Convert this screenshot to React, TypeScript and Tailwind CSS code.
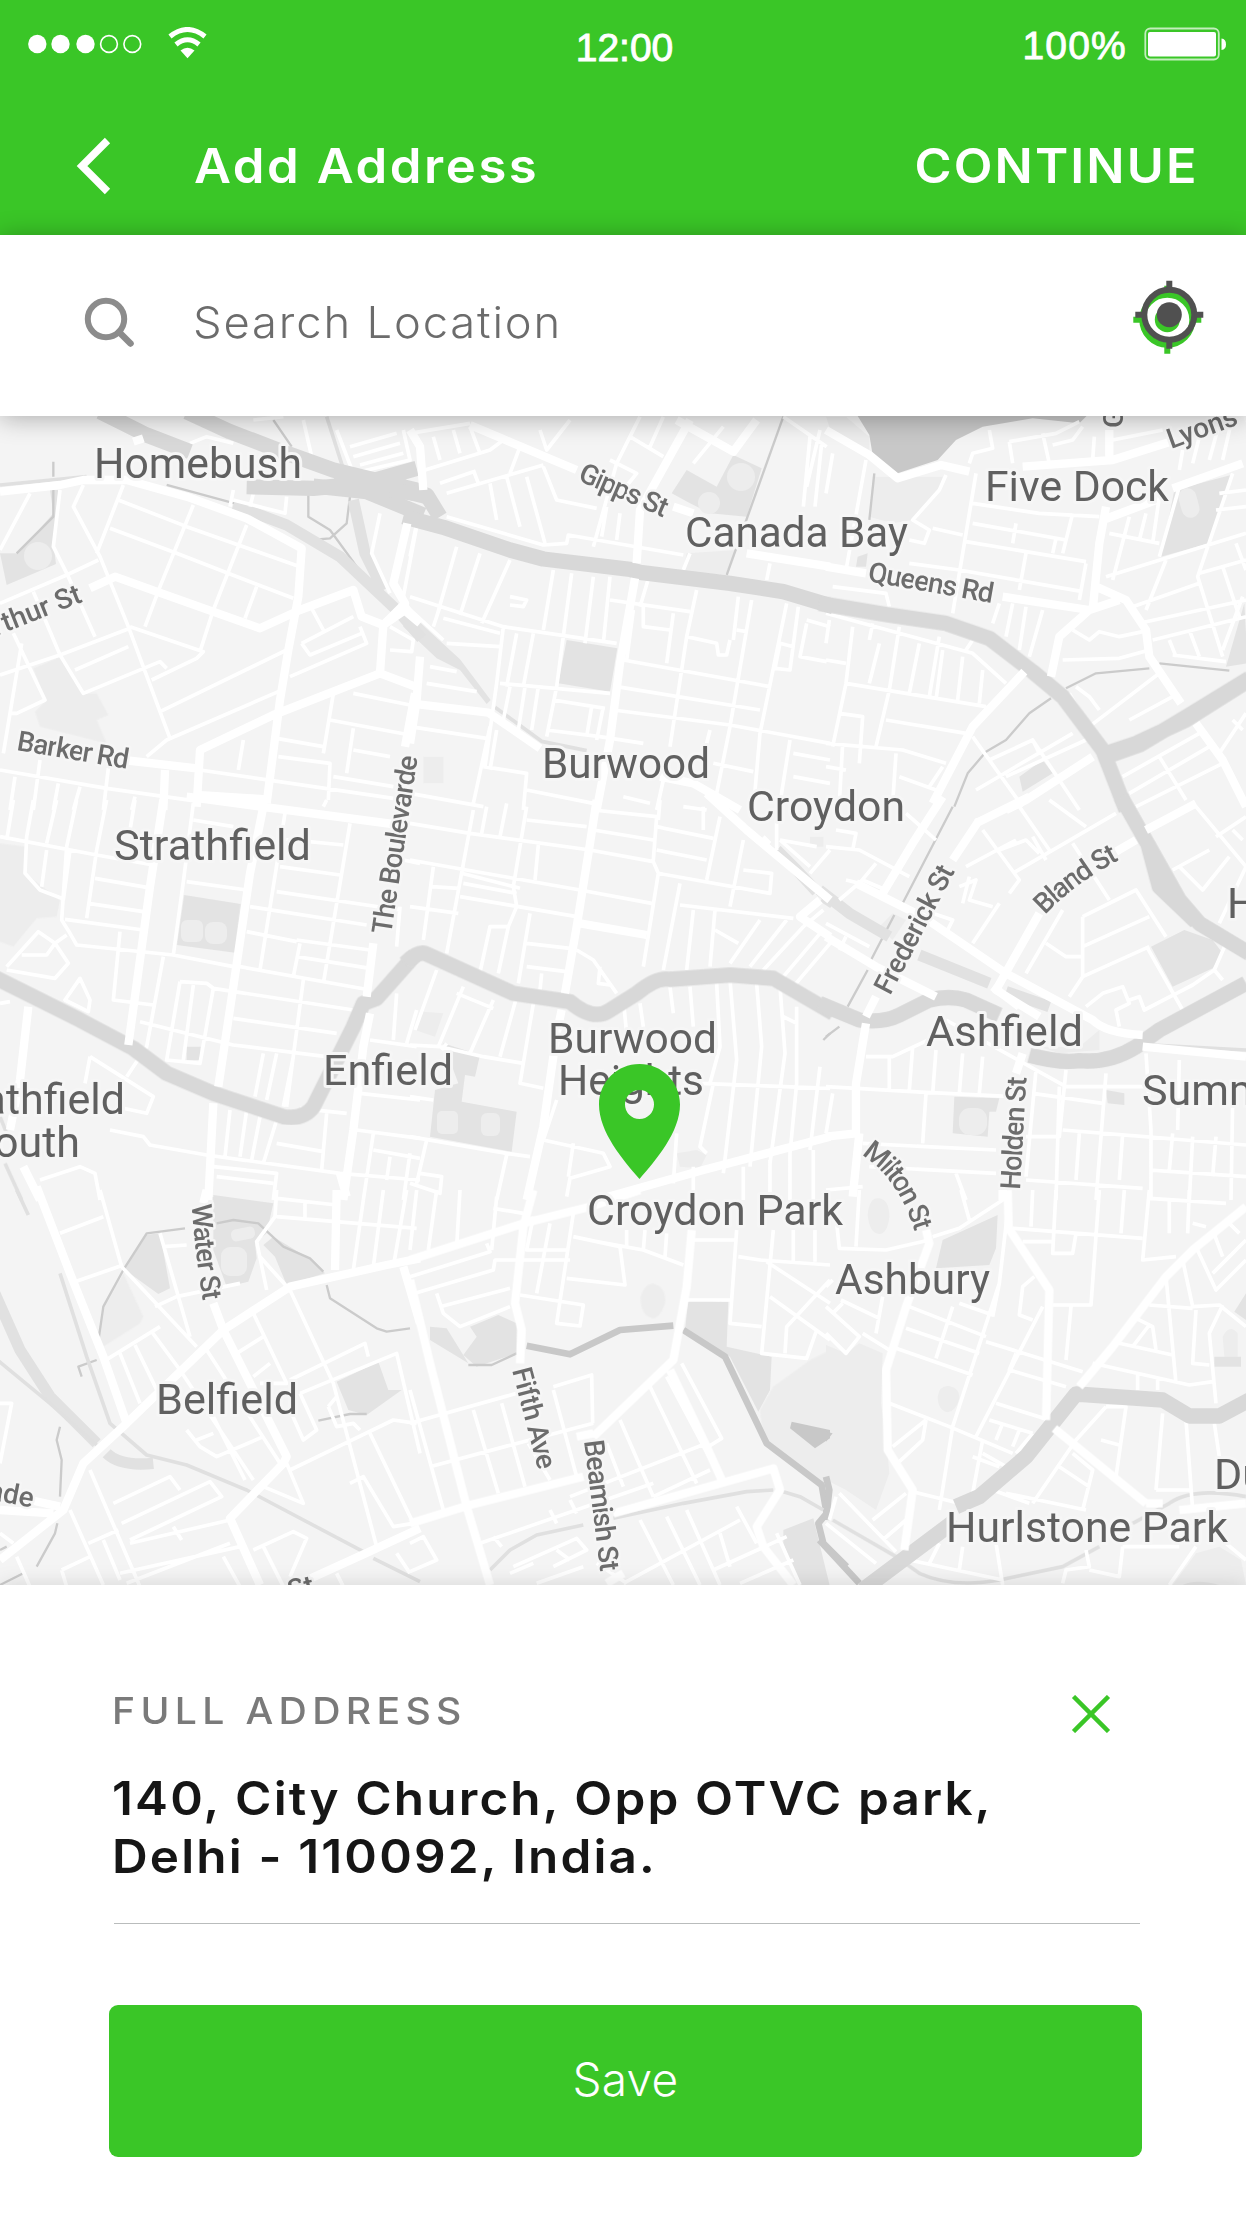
import React from "react";

type Tile = {
  x: number;
  y: number;
  paleArea?: string;
  area?: string;
  water?: string;
  minor?: string;
  street?: string;
  rail?: string;
  thinRail?: string;
  highway?: string;
  creek?: string;
  creekWide?: string;
};

/* Every tile covers 420x400 map pixels, drawn on a grid three times as fine. */
const tiles: Tile[] = [
  {
    x: 0,
    y: 410,
    paleArea:
      "M100 775L180 740L245 850L290 850L325 915L290 930L320 1000L120 950L105 905L135 875Z",
    area: "M0 430L55 430L160 310L150 240L175 240L160 400L168 462L20 525Z",
    minor:
      "M90 250L0 420M180 240L160 410L205 500L285 680M250 225L220 290L300 440L385 650L510 985M370 225L290 430M0 580L200 495L295 450M355 270L560 350L900 470M330 355L530 430L690 492L880 565M580 285L480 530L435 650M740 345L640 600L600 725M770 530L735 625M390 650L610 725L590 745L455 810M100 545L180 735L250 850L480 755L500 775M180 735L390 655M225 780L385 710M0 795L180 735M40 670L135 870L50 910L30 910M65 700L10 1030M480 905L860 720M440 1040L500 990L835 845M870 800L1100 700L1080 650M905 700L1060 620M905 700L930 735L1085 670M935 595L970 660M1140 310L1115 430L1170 550M1250 350L1210 560M1170 650L1240 690L1235 725L1170 720M1060 850L1230 885M990 930L1230 975M1060 955L1040 1090M730 990L715 1080M1000 850L970 1030M830 985L970 1010M835 1040L990 1060L985 1170M1060 1020L1170 1040M0 1080L320 1135L600 1175M600 1080L1180 1165M45 1100L30 1200M120 1050L100 1200M175 1120L160 1200M240 1130L220 1200M325 1075L310 1200M405 1160L395 1200M1000 1100L1180 1130M910 30L935 140M1010 60L1060 190L1230 150L1210 60M1050 110L1190 70M1060 140L1200 100M1080 165L1210 130M570 100L620 80L700 100M700 240L690 290M760 250L750 290M860 260L855 310L700 270M760 30L850 20",
    street:
      "M0 245L180 225L250 210L380 210L560 260L740 325L905 415L895 560L865 720L840 870L800 1180M270 535L345 500L470 545L780 655L900 600L1060 540L1085 620L1150 645M1222 340L1180 520L1215 580L1150 645L1140 790L820 915L600 1020L590 1190M1140 790L1260 835M370 1050L590 1075M590 1155L800 1168M495 1080L490 1200M1245 850L1215 1010M1200 590L1260 640M400 95L430 85M1150 645L1230 590",
    rail: "M700 285L860 345L1020 440L1185 595M1205 615L1265 685M1060 270L1095 430L1150 540",
    thinRail: "M0 225L260 200M980 20L1050 240",
    highway:
      "M300 5L440 75L570 125M560 5L690 65L860 130L1000 180L1270 245M740 230L940 235L1090 220L1250 175M940 228L1100 245L1270 315M1100 215L1280 260M1000 210L1150 240",
    creek:
      "M160 155V200M50 430L160 320V240M500 225L720 285M820 30L875 110M925 250V320L990 360L1085 490M935 390L990 385L1040 340L1050 260",
  },
  {
    x: 410,
    y: 410,
    paleArea: "M830 430L980 420L945 495L820 485ZM40 1040H100V1120H40Z",
    area: "M830 180L920 230L970 135L1055 175L1010 320L900 310L840 280L785 250ZM470 690L622 715L600 845L445 820ZM0 165L20 175L15 195L0 190ZM-20 590L60 665L150 748L242 870L230 882L150 780L80 745L-20 650Z",
    minor:
      "M0 70L180 40M45 180L240 120L280 90M70 80L90 150M130 60L150 130M180 50L210 130M90 220L190 185M110 250L400 165M190 180L205 220M240 220L260 330M290 200L330 350M350 200L405 400M390 60L410 120L480 30M330 110L300 190M400 170L440 270L560 295M690 20L620 160L550 410M660 80L760 140M600 150L680 190L640 240M630 310L620 390M590 290L575 380M110 320L400 405L470 400L475 375L820 435M760 20L720 110M940 50L850 160M1200 80L1180 290M1235 100L1215 290M1120 20L1250 110M1230 60L1190 230M820 480L840 430M20 340L0 440M140 410L80 620M210 430L150 615M300 450L215 640M430 480L400 660M485 490L440 830L410 980M550 500L525 700M600 500L580 700M720 490L690 590M0 560L280 650L620 700M90 590L70 650M100 625L270 670M110 700L270 710M300 560L350 570L340 590L300 585M280 650L260 820L225 1070M320 670L290 830M370 670L340 830M60 770L140 785M50 820L200 845M270 820L600 850M300 830L280 930M345 830L325 960M385 830L365 960M430 870L585 895M545 890L530 980M580 890L560 990M600 570L840 605M700 590V650L780 660M670 600L650 750M790 610L770 760M860 540L830 680L780 1010M830 680L920 700L925 735L950 735L960 690M640 750L1080 830M620 830L1050 900M610 900L960 945L1260 1000M985 560L970 690M1025 570L960 950L920 1150M980 660L1010 665M1130 580L1050 970L1030 1200M1165 590L1140 780L1095 775L1110 700L1150 710M1190 640L1170 740L1250 755M1190 630L1260 650M1080 460L1070 510M0 950L230 985M240 950L190 1180M260 960L240 1080M220 1070L350 1090L340 1200M410 960L570 980L700 1000M900 960L880 1040M910 1060L1030 1085M1140 990L1110 1180M1150 1030L1260 1050M1150 1100L1260 1120M0 1150L220 1190M350 1140L550 1180M640 1160L720 1180M760 1110L740 1200M-10 590L100 690",
    street:
      "M0 60L30 110L40 240M180 45L500 180M840 30L690 300L680 460M675 505L630 760L600 990L560 1200M800 30L970 125L1040 30M30 740L20 870L0 1000M0 880L235 908L390 1015M750 1100L850 1120L990 1200M790 290L850 310M1010 430L1260 470",
    thinRail: "M255 892L395 994L530 1022",
    highway:
      "M-60 240L50 255L90 320M-20 320L100 352L300 420L400 447L660 478L690 487L960 520L1120 545L1270 590",
    creek: "M1120 20L950 495",
  },
  {
    x: 826,
    y: 410,
    paleArea:
      "M140 200L350 200L340 240L260 330L200 340L130 320ZM0 20L60 20L130 80L130 120L20 80Z",
    area: "M1045 240L1215 195L1150 400L1005 440ZM580 1100L650 1050L680 1090L590 1145ZM1255 580L1200 770L1265 760ZM95 440L125 430L120 470H90Z",
    water: "M90 10L130 75L140 135L215 190L335 150L390 90L470 50L620 25L760 40L790 10Z",
    minor:
      "M20 130L0 250M120 150L60 480M360 195L340 240L260 330L310 360L295 400L250 390M430 160L440 130L500 115L490 60M550 95L560 160M550 95L690 70L760 35M650 70L670 160M680 105L740 90L770 50M805 80L800 150M860 90L1010 60M450 190L380 610M440 280L640 310L820 320M440 340L720 390M320 355L410 375M420 395L780 455M570 340L560 400M740 310L710 430M690 385L680 430M250 460L400 480L770 545M600 430L580 540M780 460L760 570M850 370L1000 400M910 320L860 510M960 310L940 390M1000 260L980 400M1020 450L960 600M1060 230L1000 440M840 500L1260 370M1220 190L1115 500L1190 740M1180 250L1260 240M1170 300L1260 290M1120 490L1260 450M920 590L1120 520M940 640L1260 570M980 690L1260 620M1190 470L1240 620M1230 400L1260 480M1250 560L1190 720M1030 690L1050 740M1090 660L1120 740M1040 735L1200 755M1100 160L1130 40M1150 150L1180 40M1190 150L1215 40M1060 180L1070 120M520 580L500 640M560 580L540 680M600 590L580 720M650 600L610 740M740 660L790 690L820 665L880 680L950 665M710 750L880 745L970 720M0 610L440 730L540 820M20 530L180 550L190 590M10 630L0 700M80 650L60 820L20 1010M140 640L130 690M220 650L190 840L150 1010M160 700L130 820M280 700L250 850M340 680L310 860M350 720L330 870M410 740L395 870M470 780L460 880M420 720L440 690M60 820L480 890M180 930L420 970M40 910L110 920L100 1060M0 1000L230 1020L360 1060M0 750L60 760M0 1070L60 1080M210 1030L200 1180M350 1070L310 1130M220 1100L330 1140M440 980L590 1190M490 1050L620 990L760 1200M450 1140L740 970M540 1100L780 990M730 850L790 950L1000 790M750 830L790 860L820 900M910 930L1040 860M1260 910L1180 1030M1250 960L1220 930M890 1100L1120 970M910 1150L1150 1010M930 1190L1190 1060M1000 1040L1080 1170M50 1000L40 1180M620 990L640 1030",
    street:
      "M0 60L130 135L215 205L345 165L430 185M590 170L860 150L1050 90M850 60V150M1040 235L1250 160M840 290L820 400L800 600M830 330L990 270M530 560L790 600L880 570M810 530L900 570L960 660L970 740L1065 880M790 600L700 680L675 800M595 785L440 950L320 1180M1110 940L1190 1050L1260 1190M800 1040L600 1170L540 1200M0 470L120 490",
    highway:
      "M-20 580L190 615L360 640L490 685L620 785L710 860L830 1020L900 1200M840 1030L930 1000L1080 930L1270 810M840 1040L940 1005L1090 915L1270 805",
    creek: "M720 835L810 790L970 775M1000 760L1210 782M675 865L610 910L540 990L480 1025L425 1090L385 1190M145 190L130 330",
  },
  {
    x: 0,
    y: 800,
    paleArea: "M0 130L75 140L75 220L180 300L170 350L110 355L40 440L0 425Z",
    area: "M552 285L722 312L705 458L530 435ZM560 740H602V780H560ZM635 1190L700 1200H630Z",
    minor:
      "M40 0L20 120M100 0L80 110L75 220L120 270L185 295M170 0L140 130M230 0L200 140L185 360L210 400L230 435L520 465L700 500M320 0L290 150L260 355M405 0L390 90M0 110L290 165L460 195M140 150L125 260M210 150L190 300M285 235L440 262M265 310L430 335M195 358L430 390M20 500L115 395L165 430L205 490L165 535L20 510M65 465L140 465L165 430L200 405M240 535L195 600L265 635L270 600ZM0 610L30 605M360 395L340 600L460 615M490 470L440 740L380 830M540 545L500 780L600 790L640 565L620 550L540 545M640 565L1060 630M580 555L550 780M420 665L700 735L980 770M580 10L550 245L520 465M560 245L740 270M580 60L700 80M855 40L780 510M1050 70L970 550M830 115L1030 135M840 200L1020 225M830 275L1200 330M750 320L1100 375M740 395L890 425M890 420L1110 450M890 470L1110 505M720 500L1110 570M900 430L880 530M910 540L860 920M700 655L1010 700M1110 720L1250 740M790 760L765 890M830 760L800 900M880 770L850 920M1190 580L1180 720M1250 630L1220 730M1200 320L1190 440M1210 180L1260 190M980 0L970 20M270 770L255 850M270 770L460 890L440 940L370 925M330 990L430 1010L450 1035L620 1065L1020 1120L1260 1140M690 930L675 1070M740 930L720 1070M780 950L755 1080M830 960L790 1090M830 1030L970 1055M980 940L965 1110M900 925L1040 940M1070 990L1260 1015M1120 1000L1090 1200M1120 1050L1260 1075M1170 1070L1160 1140M1230 1060L1210 1200M640 1100L830 1120L820 1200M650 1130L820 1150M1080 880L1260 900M120 1140L240 1100L285 1120L300 1200",
    street:
      "M490 0L450 260L385 735M790 20L750 220L700 560L655 860M640 910L625 1200M560 -10L1200 75M85 620L60 840L30 990M1120 430L1100 590M1110 640L1090 740L1060 990L1030 1200M70 1100L120 1200M1020 1120L1040 1190",
    thinRail: "M0 950L20 1000M15 1090L65 1200",
    highway:
      "M-20 530L90 585L240 660L400 745L500 820L640 880L850 950Q910 960 940 920L1060 680L1090 610L1130 595L1245 465",
  },
  {
    x: 410,
    y: 800,
    paleArea: "M40 635L100 640L75 710L15 690ZM800 1060L860 1050L890 1065L870 1105L810 1100ZM1200 110H1240V140H1200Z",
    area: "M100 730L210 765L195 830L165 825L155 905L320 935L305 1055L60 1010L75 870L145 850Z",
    minor:
      "M0 70L180 100L540 150L730 185L745 220L1080 280L1085 220L1000 210M0 180L510 270L725 310M0 320L145 340M150 290L500 350M155 220L330 265M160 250L320 280M65 260L145 265M70 200L40 420M190 30L110 460M230 20L215 100M290 10L270 110M350 20L310 260L320 320L295 380H240L205 540M295 380L265 520M385 135L375 240M360 340L325 550M350 60L530 80M350 430L480 445M350 500L470 515M395 520L390 570M550 30L740 50L730 180M550 90L730 120M750 0L745 60M740 80L910 115M740 150L890 180M930 50L890 240M880 20V90M1000 120L960 320M820 20L890 30M1080 130L1060 110M745 220L700 500M810 250L760 510M850 330L830 510M810 315L1150 355M915 330L900 500M915 390L985 430M1050 360L960 490M1130 360L1020 500M1180 380L1060 510M1230 400L1120 530M1260 430L1150 560M500 450L550 480L620 580M570 500L565 550L600 555M1260 150L1200 220M1110 120L1220 140M1110 120L1200 200M80 510L15 690M160 560L85 740M250 600L180 760M320 590L270 770M370 610L330 850L400 865M140 580L250 625M0 735L90 740L220 770L340 790M110 730L95 750M0 890L70 900M0 1010L290 1060L360 1070M290 1065L260 1200M50 1020L20 1150M0 1150L90 1180L95 1130L30 1120M400 1020L580 1060L600 1100L480 1135L470 1190M490 1030L475 1130M440 900L400 1020M640 600L650 700M690 610L700 680M780 560L790 640M840 560L850 680M920 550L930 740L900 850M960 540L980 780L940 1120M1040 550L1055 740L1020 1100M1110 560L1125 760L1080 1090M1160 620L1160 850L1140 1060M1120 650L1160 670M870 850L1260 865M910 850L870 1040L890 1060M1230 800L1200 1050M800 1000L790 1150M850 1100V1200M1000 1100V1200M1080 1080V1200M1140 1060V1200M1210 1050V1200M1100 60V150M1180 380L1240 330",
    street:
      "M560 0L540 130L500 380L465 580M510 370L710 405M455 630L440 700L400 980L350 1200M890 -20L1010 90L1260 300M1230 300L1170 350L1260 410M560 1200L880 1110L1260 1010",
    rail: "M1100 150L1160 210L1220 275M1240 290L1270 310",
    thinRail: "M940 20L1040 110L1120 170",
    highway:
      "M-15 490Q20 455 45 460L310 580L480 605Q550 665 600 630L680 580Q740 530 780 538L960 525L1090 535L1270 640",
    creek: "M1240 720L1260 700",
  },
  {
    x: 826,
    y: 800,
    paleArea: "M160 380L200 340L240 360L200 420ZM640 740L760 740L820 690V750L700 760Z",
    area: "M975 440L1075 390L1160 420L1190 460L1160 505L1040 560ZM385 890L520 895L510 935H490L485 1010L380 1000ZM840 870L895 880V915L845 910Z",
    minor:
      "M0 140L100 150L250 230M30 90L90 100L80 150M240 40L330 120M150 190L100 250L60 240M40 300L110 240L180 270M0 370L130 440M60 410L40 450M400 260L450 240L430 300L500 320M420 200L570 120M410 310L430 230M320 340L380 360L360 400M470 90L580 240L550 280M520 150L600 120L640 160M620 110L660 180M580 20L670 150M560 220L870 40M670 0L780 80M740 130L850 300M440 430L520 310M710 330L600 520M770 350L930 270L1020 410M770 350V530L730 590M770 440L970 350M770 530L970 440M965 445L1070 630M660 430L720 470H770M780 620L830 580L890 560L910 610L870 630L880 680M910 600L940 590L955 630L1100 555L1165 510L1200 430M1165 510L1190 540M1110 20L1260 200M1040 210L1150 150M1060 200L1130 270L1210 170M1170 110L1260 50M1220 90L1250 120M1180 370L1260 200M0 860L260 875L560 890M620 880L830 910M120 770L200 770L370 690M190 770V870M260 740L250 870M330 750L320 880M410 760L400 880M470 770L460 880M360 660L720 860L990 860M300 880L290 1030M110 1030L300 1040L510 1050M130 1100L510 1120M390 1120L420 1200M600 1010L700 1010L720 810M700 860L690 1200M840 820L810 1200M710 990L1260 1035M600 1140L950 1165M960 760L975 990V1200M1040 1000L1030 1110M970 1110L1260 1130M1100 1010L1090 1200M1170 1010L1160 1130M1220 900L1215 1200M760 1000L750 1140M890 1000L880 1140M0 1170L110 1160M0 1000L20 880M630 810L600 1130M1060 780L1055 990",
    street:
      "M350 -10L260 130L170 280M90 250L290 350L540 520L800 660Q840 700 950 705M0 410L150 500L330 590M120 670L90 850V1000L0 1010M460 60L380 180M610 -10L450 70M930 120L870 155M640 340L510 570L640 650M500 560L580 620M950 740L1260 770M960 90L1110 10M590 760L570 820M530 1170V1200M100 1000L80 1190M150 590L120 650",
    rail: "M-20 270L70 340L190 410M280 465L490 550M540 575L670 620",
    thinRail: "M980 735L1260 750",
    highway:
      "M-20 610L100 660Q170 670 220 645L310 600Q370 585 420 600L520 645M610 765Q700 790 760 782Q850 790 930 740L1000 690L1260 550M885 -10L970 140L1060 300L1120 370L1270 460M965 130L1000 260L1110 365",
    creek: "M380 20L230 310M205 345L130 490M125 510L65 620M40 680L0 710",
  },
  {
    x: 0,
    y: 1190,
    paleArea: "M370 250L430 380L420 400L310 470L295 440L310 350Z",
    area: "M640 15L820 40L800 130L765 160L770 205L745 275L680 290L640 180ZM435 135L480 130L510 295L475 312L375 240ZM790 165L820 140L935 210L975 250L860 285L825 200ZM1010 575L1135 515L1165 600L1205 600L1100 675L1045 660Z",
    minor:
      "M180 130L310 80M225 275L370 225M300 0L365 230L590 470M480 130L570 440M490 170L560 165M310 515L480 410M465 350L530 320L720 280M360 490L420 640M405 465L480 620M455 425L540 540M620 480L840 820M540 540L760 870M830 0L825 80L770 155L800 300M830 25L1010 45M830 80L1250 115M915 40V85M1090 30L1060 240M1150 0L1120 230M1220 0L1180 230M780 200L870 300L1000 580L1130 1070M760 370L860 580L780 580M710 490L790 440M760 560L810 520M870 570L1095 460L1105 500M900 610L1190 490L1260 790M900 610L950 720L910 750L870 660M985 650L1010 620M985 650L1010 710L1060 700L1080 720M870 840L1180 690L1250 700M1110 730L1240 1000L1180 1010L1090 860L1050 880M560 720L600 770L650 800L790 740M590 750L640 730M640 680L735 870M790 890L910 940L860 820M270 840L420 1190M340 940L510 860L540 900M365 1000L630 875L665 920L390 1050M390 1060L690 990M360 1150L720 1070M520 1010L545 1050M210 960L310 1185M265 1060L355 1020M185 1140L270 1100M185 1140L200 1190M310 1050L360 1170M760 1080L880 1025L920 1045L870 1160M790 1070L850 1190M670 1100L720 1190M0 640H35L0 820M0 1030L40 1060M50 1100L90 1190M1190 1090L1230 1150M1010 1150L1030 1190M380 1180L690 1060",
    street:
      "M110 -10L210 250L310 500L380 700M620 0L610 40M640 340L670 420L860 800L850 820L690 985L780 1185M1260 205L1160 225L870 290L670 420L380 700L250 820L190 960L0 1110M1010 0L1005 240M1210 230L1260 400M0 960L160 970M90 930L180 950M900 1180L1130 1075L1260 1015",
    rail: "M-20 300L60 480L150 620L290 760M320 790Q360 830 460 820",
    thinRail:
      "M-20 500L150 640L290 765M180 250L260 500L330 700L440 795L560 825L740 900L1090 1085M1120 1105L1260 1175M50 0L85 75",
    creek:
      "M555 115L440 130L370 240L310 350L297 440M650 100L700 90L775 100L850 170L930 205L970 245M980 285L990 325L1130 415L1160 425L1230 415M290 510L235 530L245 560M180 710L170 750L185 810L180 920M172 1000L165 1030L110 1130M70 1150L0 1185M955 692L1050 672H1100M0 1080L20 1070",
  },
  {
    x: 410,
    y: 1190,
    paleArea:
      "M1090 590L1200 510L1260 480V900L1060 750L1050 660ZM728 280Q770 290 765 340Q750 385 728 385Q690 375 692 320Q700 285 728 280Z",
    area: "M835 330L955 335L950 470L1085 500L1080 600L1045 665L960 500L825 420ZM180 410L265 375L320 400L320 490L200 530L160 495L200 440ZM60 410L110 415L175 520L60 450ZM1120 1020L1210 985L1260 1190H1170L1120 1060Z",
    water: "M1145 695L1260 720V745L1215 775L1140 715Z",
    minor:
      "M20 0L0 180M80 0L55 180M150 0L140 170M0 260L240 185L230 160M15 310L250 240L255 210L480 210M90 350L300 295M80 310L100 370L150 410L300 350M260 20L245 180M250 55L340 70M370 80L350 180L470 180M420 100L380 310M490 70L440 400L510 408L520 345L330 315M470 265L645 285L630 170L490 140M560 155L700 180L820 225M650 120V175M705 120L700 180M770 130L765 200M850 150H980M980 120L960 400L1055 410M985 200L1050 210L1260 225M1090 120L1055 490L1190 505L1220 420M1070 215L1260 340M1080 320L1260 450M1260 270L1130 410L1125 490M1150 120V215M1215 120V215M0 700L320 610M430 590L545 555L548 700M60 830L340 755L550 700M0 600L100 960M190 660L265 910M275 640L345 890M355 760L420 870M430 600L500 860M720 590L860 880M770 560L940 880M630 690L730 920M815 520L935 745L895 770M480 920L890 760M730 920L900 840M210 1060L730 880M250 1040L275 1070M480 930L500 970M420 960L440 1000M590 760L640 890M0 1060L40 1040L80 1110L0 1145M310 1130L500 1045L530 1080L430 1130M300 1150L370 1120M440 1080L480 1110M640 1180L990 990M690 990L790 1185M770 980L870 1185M830 960L930 1185M930 1030L960 1130M980 950L1040 1060M910 1140L1130 1040M990 1180L1150 1110M560 1120L650 1180M1100 1030L1170 1185M820 330H960M380 1180L520 1130",
    street:
      "M0 210L340 100L540 50L690 0M370 0L340 110L315 340L335 420L330 520M0 270L60 520L170 950L240 1185M845 120L830 290L790 510L550 740M780 540L890 770L940 880M0 1000L180 945L520 860M550 730L500 740M610 970L1090 835L1110 900L1040 1010L1060 1070L1150 1185M590 1180L640 1150",
    thinRail: "M240 1140L300 1080L380 1035L520 1005M610 985L820 940L1010 905L1090 900M1120 905L1170 920L1240 960",
    creek: "M175 525H245L320 490",
    creekWide: "M350 467L480 493L630 420L790 407M820 420L945 500L1070 760L1235 885L1250 970L1225 1000L1240 1060L1310 1130",
  },
  {
    x: 826,
    y: 1190,
    paleArea:
      "M0 465L60 490L100 460L170 490L165 640L185 790L190 850L150 960L60 900L0 870ZM125 75Q130 20 160 25Q190 30 190 80Q185 130 160 132Q130 130 125 75ZM335 620Q340 585 370 588Q402 595 400 625Q390 665 365 667Q335 660 335 620ZM1190 440Q1210 400 1235 430V500H1195ZM1040 1185L1110 1090L1180 1070L1245 1110L1260 1185Z",
    area: "M350 150L515 75L510 175L490 225L330 235ZM1165 500H1245V530H1165ZM1225 365L1260 310V390ZM1070 1185Q1110 1165 1180 1185Z",
    minor:
      "M100 0L90 170M30 80L40 175L180 180L310 150M320 140L400 115L545 20M405 0L430 90M0 430L60 490L100 440L0 350M45 330L160 385M110 430L190 480M20 370L50 340M250 350L480 440M240 415L460 490M210 475L440 555M400 340L500 375M380 350L330 505M520 280L380 710L340 960M480 455L770 545M650 350L450 740M550 20L520 280L500 380M570 490L550 540L720 590M510 640L670 690M190 640L370 710L560 790M490 690L620 730M440 800L520 830M530 700L510 750M580 720L560 770M620 730L570 790M470 750L440 910M470 790L540 830M300 690L200 770M300 690L290 750L220 815M620 0L615 110M690 0L680 190H740L750 130M560 115L950 145M820 0L795 345H680M590 155H680M625 260L590 290L580 375L620 390M735 350L720 510M895 0L885 130M970 0L950 210L1050 200M970 25L1200 40M1030 30V130M1090 0L1085 130M1100 100L1140 110M1110 170L1170 300L1260 210M1160 120L1190 200M1160 250L1260 150M1200 90L1240 130M1070 210L1100 350L1180 345L1260 410M970 345L1100 355M1020 260L1050 580M1110 360L1100 520L1150 525M1190 345L1150 430L1170 640M930 385L980 410L990 480M880 460L1040 495M970 405L920 470M800 520L1090 585L1160 575M935 550V600M995 560V600M840 650L750 750L620 940M840 650H900L870 860M825 750L880 765M1010 670L990 900M1080 690L1100 960M1165 700L1180 800M740 790L800 840L770 960M700 830L790 890M540 910L780 960M610 940L500 900M260 905L400 940M240 910L140 990M240 990L170 1050M40 910L210 1085M0 1000L150 1120M30 920L10 990M990 900H1100M250 1110L530 1170M340 1060L310 1120M410 1070L400 1140M510 1060L530 1185M780 1080L790 1130L720 1140L710 1180M890 1070L880 1160L790 1140M890 1070H1060M1110 1070L1030 1185M1200 1060L1260 1110M0 290L20 270M170 320L150 430",
    street:
      "M545 0L548 115L670 300L660 690M300 120L310 160L240 350L180 540L185 780L260 900L235 1080M760 590L860 470L1020 260L1100 180L1260 50M685 715L960 940M960 940H1010M1060 960L1260 940",
    thinRail:
      "M20 990L210 1100L280 1150Q380 1195 520 1170L710 1130L820 1070M920 1000L1030 940Q1100 890 1260 920",
    highway:
      "M110 1200L390 990M390 950L460 920L600 800L750 612L1010 630L1090 678H1180L1270 630",
    creekWide: "M0 860L10 900L0 990M-20 1050L100 1180",
    water: "M0 725L20 730L0 755Z",
  },
];

type Layer = Exclude<keyof Tile, "x" | "y">;

function MapLayer({
  name,
  fill = "none",
  stroke = "none",
  width = 0,
}: {
  name: Layer;
  fill?: string;
  stroke?: string;
  width?: number;
}) {
  return (
    <g fill={fill} stroke={stroke} strokeWidth={width} strokeLinejoin="round">
      {tiles.map((t, i) =>
        t[name] ? (
          <path key={i} d={t[name]} transform={`translate(${t.x} ${t.y}) scale(0.33333)`} />
        ) : null
      )}
    </g>
  );
}

type Place = { t: string; x: number; y: number; w?: number; end?: boolean };

const places: Place[] = [
  { t: "Homebush", x: 94, y: 478, w: 208 },
  { t: "Canada Bay", x: 685, y: 547, w: 223 },
  { t: "Five Dock", x: 985, y: 501, w: 184 },
  { t: "Burwood", x: 542, y: 778, w: 168 },
  { t: "Croydon", x: 747, y: 821, w: 158 },
  { t: "Strathfield", x: 114, y: 860, w: 197 },
  { t: "H", x: 1227, y: 918 },
  { t: "Burwood", x: 548, y: 1053, w: 169 },
  { t: "Heights", x: 558, y: 1095, w: 146 },
  { t: "Enfield", x: 323, y: 1085, w: 130 },
  { t: "Ashfield", x: 926, y: 1046, w: 157 },
  { t: "Summ", x: 1142, y: 1105 },
  { t: "athfield", x: 125, y: 1114, end: true },
  { t: "outh", x: 80, y: 1157, end: true },
  { t: "Croydon Park", x: 587, y: 1225, w: 256 },
  { t: "Ashbury", x: 835, y: 1294, w: 155 },
  { t: "Belfield", x: 156, y: 1414, w: 142 },
  { t: "Du", x: 1214, y: 1489 },
  { t: "Hurlstone Park", x: 946, y: 1542, w: 282 },
];

type Street = { t: string; d: string; w?: number };

const streets: Street[] = [
  { t: "Gipps St", d: "M577 480L683 526", w: 94 },
  { t: "Queens Rd", d: "M867 581L1020 608", w: 127 },
  { t: "rthur St", d: "M-4 636L110 591", w: 94 },
  { t: "Barker Rd", d: "M16 750L170 776", w: 113 },
  { t: "The Boulevarde", d: "M391 935L421 735", w: 180 },
  { t: "Frederick St", d: "M890 996L971 840", w: 141 },
  { t: "Bland St", d: "M1045 915Q1080 878 1135 852", w: 93 },
  { t: "Holden St", d: "M1020 1190L1028 1050", w: 113 },
  { t: "Milton St", d: "M861 1155Q903 1180 919 1247", w: 96 },
  { t: "Water St", d: "M192 1205Q194 1250 206 1320", w: 97 },
  { t: "Fifth Ave", d: "M512 1370L546 1500", w: 104 },
  { t: "Beamish St", d: "M584 1441L604 1600", w: 132 },
  { t: "Lyons R", d: "M1171 449L1270 413" },
  { t: "Gr", d: "M1123 428V350" },
  { t: "ade", d: "M-13 1499L60 1513" },
  { t: "St", d: "M290 1600L340 1588" },
];

function CityMap() {
  return (
    <svg viewBox="0 416 1246 1169" className="block h-full w-full bg-[#f4f4f4]">
      <g className="blur-[0.6px]">
        <MapLayer name="paleArea" fill="#ededed" />
        <MapLayer name="area" fill="#e3e3e3" />
        <g fill="#ededed">
          <circle cx="741" cy="477" r="14" />
          <circle cx="709" cy="503" r="11" />
          <circle cx="38" cy="556" r="14" />
          <rect x="1180" y="488" width="18" height="30" rx="9" transform="rotate(-15 1189 503)" />
          <rect x="181" y="920" width="22" height="22" rx="6" />
          <rect x="205" y="922" width="22" height="22" rx="8" />
          <rect x="437" y="1111" width="21" height="23" rx="5" />
          <rect x="481" y="1113" width="19" height="23" rx="6" />
          <rect x="959" y="1108" width="28" height="27" rx="11" />
          <rect x="231" y="1228" width="24" height="12" rx="5" transform="rotate(-12 243 1234)" />
          <rect x="221" y="1247" width="26" height="29" rx="9" />
        </g>
        <MapLayer name="water" fill="#c8c8c8" />
        <MapLayer name="creek" stroke="#cbcbcb" width={7} />
        <MapLayer name="creekWide" stroke="#c8c8c8" width={20} />
        <MapLayer name="rail" stroke="#e1e1e1" width={34} />
        <MapLayer name="thinRail" stroke="#e0e0e0" width={11} />
        <MapLayer name="minor" stroke="#ffffff" width={11} />
        <MapLayer name="highway" stroke="#d8d8d8" width={46} />
        <MapLayer name="street" stroke="#ffffff" width={25} />
      </g>
      <g
        className="blur-[0.5px]"
        fontFamily='Roboto, "Open Sans", sans-serif'
        fill="#606060"
        stroke="#f6f6f6"
        strokeWidth="6"
        strokeLinejoin="round"
        paintOrder="stroke"
      >
        {places.map((p, i) => (
          <text
            key={i}
            x={p.x}
            y={p.y}
            fontSize="43"
            textLength={p.w}
            lengthAdjust="spacingAndGlyphs"
            textAnchor={p.end ? "end" : "start"}
          >
            {p.t}
          </text>
        ))}
        {streets.map((s, i) => (
          <g key={i} strokeWidth="5">
            <path id={`street-${i}`} d={s.d} fill="none" stroke="none" />
            <text fontSize="28" fontWeight="500" fill="#6c6c6c" textLength={s.w}>
              <textPath href={`#street-${i}`}>{s.t}</textPath>
            </text>
          </g>
        ))}
      </g>
    </svg>
  );
}

function StatusBar() {
  return (
    <div className="grid h-[88px] shrink-0 grid-cols-3 items-center pl-[28px] pr-[20px] font-['Liberation_Sans',sans-serif] text-[39px] leading-none">
      <div className="flex items-center gap-[26px]">
        <svg width="114" height="20" viewBox="28 34 114 20" fill="#fff">
          <circle cx="37.3" cy="44" r="9.2" />
          <circle cx="60.5" cy="44" r="9.2" />
          <circle cx="85.5" cy="44" r="9.2" />
          <g fill="none" stroke="#fff" strokeWidth="1.6">
            <circle cx="109" cy="44" r="8.4" />
            <circle cx="132.3" cy="44" r="8.4" />
          </g>
        </svg>
        <svg width="40" height="32" viewBox="168 27 40 32" className="-mt-[2px]">
          <g fill="none" stroke="#fff" strokeWidth="5">
            <path d="M170 36.5Q187.500 22.500 205 36.500" />
            <path d="M176 44.500Q187.500 35 199 44.500" />
          </g>
          <path d="M180.500 50.500Q187.500 45 194.500 50.500L187.500 58.200Z" fill="#fff" />
        </svg>
      </div>
      <span className="mr-[5px] mt-[6px] text-center [-webkit-text-stroke:0.9px_white]">12:00</span>
      <div className="flex items-center justify-end gap-[17px]">
        <span className="mt-[3px] tracking-[1.2px] [-webkit-text-stroke:0.9px_white]">100%</span>
        <svg width="82" height="34" viewBox="1144 27 82 34">
          <rect x="1145.300" y="28.500" width="73.500" height="31" rx="5" fill="none" stroke="#c4eebe" strokeWidth="1.800" />
          <rect x="1148" y="32" width="68" height="24.500" rx="2" fill="#fff" />
          <path d="M1221.500 38.500Q1226 39 1226 44.300Q1226 49.500 1221.500 50Z" fill="#fff" />
        </svg>
      </div>
    </div>
  );
}

function TargetShape({ x, y, color }: { x: number; y: number; color: string }) {
  return (
    <g transform={`translate(${x} ${y})`} stroke={color} strokeWidth="6" fill="none">
      <circle r="25" />
      <circle r="12.500" fill={color} stroke="none" />
      <path d="M0 -34V-25M0 25V34M-34 0H-25M25 0H34" />
    </g>
  );
}

export default function App() {
  return (
    <div className="flex h-[2215px] w-[1246px] flex-col overflow-hidden bg-white font-[Inter,sans-serif]">
      <header className="flex h-[235px] flex-col bg-[#3ac627] text-white">
        <StatusBar />
        <div className="flex h-[155px] shrink-0 items-center pl-[75px] pr-[47px]">
          <svg width="36" height="58" viewBox="0 0 36 58" fill="none" stroke="#fff" strokeWidth="7.500">
            <path d="M32.500 3.500L7 29L32.500 54.500" />
          </svg>
          <h1 className="ml-[83px] origin-left scale-x-[1.06] text-[48px] font-semibold leading-none tracking-[2.4px]">Add Address</h1>
          <button className="ml-auto origin-right scale-x-[1.05] text-[48px] font-semibold leading-none tracking-[2px]">CONTINUE</button>
        </div>
      </header>

      <div className="z-10 flex h-[181px] items-center bg-white pb-[7px] pl-[84px] pr-[42px] shadow-[0_2px_24px_rgba(0,0,0,0.3)]">
        <svg width="50" height="50" viewBox="84 297 50 50" fill="none" stroke="#8c8c8c" strokeWidth="6">
          <circle cx="106" cy="319" r="18.200" />
          <path d="M119 332L130.500 343.500" strokeWidth="6.500" strokeLinecap="round" />
        </svg>
        <span className="ml-[59px] origin-left scale-x-[1.03] text-[44px] font-light leading-none tracking-[1.8px] text-[#6c6c6c]">Search Location</span>
        <svg className="-mt-[11px] ml-auto" width="72" height="76" viewBox="1132 279 72 76">
          <TargetShape x={1167.3} y={319.700} color="#3ac627" />
          <TargetShape x={1169.3} y={314.700} color="#505050" />
        </svg>
      </div>

      <main className="relative h-[1169px] overflow-hidden">
        <CityMap />
        <svg className="absolute left-[599px] top-[648px]" width="81" height="115" viewBox="0 0 81 115">
          <path
            fill="#3ac627"
            fillRule="evenodd"
            d="M40.500 0C18 0 0 18 0 40.500C0 68 24 96 40.500 115C57 96 81 68 81 40.500C81 18 63 0 40.500 0ZM40.500 26A14.500 14.500 0 1 1 40.500 55A14.500 14.500 0 1 1 40.500 26Z"
          />
        </svg>
      </main>

      <section className="z-10 flex flex-1 flex-col bg-white pl-[109px] pr-[104px] pt-[104px] shadow-[0_0_20px_rgba(0,0,0,0.13)]">
        <div className="flex items-center justify-between pl-[3px] pr-[31px]">
          <h2 className="origin-left scale-x-[1.06] text-[37px] font-medium leading-[44px] tracking-[5px] text-[#7a7a7a]">FULL ADDRESS</h2>
          <svg className="mt-[5px]" width="40" height="38" viewBox="0 0 40 38" stroke="#3ac627" strokeWidth="4.500">
            <path d="M2.500 1.500L37.500 36.500M37.500 1.500L2.500 36.500" />
          </svg>
        </div>
        <p className="ml-[3px] mt-[37px] origin-left scale-x-[1.075] whitespace-nowrap text-[46px] font-semibold leading-[57.5px] tracking-[2px] text-[#161616]">
          140, City Church, Opp OTVC park,
          <br />
          Delhi - 110092, India.
        </p>
        <div className="ml-[5px] mr-[2px] mt-[38px] h-px shrink-0 bg-[#b9bcbc]" />
        <button className="mt-[81px] h-[152px] w-[1033px] shrink-0 rounded-[9px] bg-[#3ac627] pb-[3px] text-[46px] font-light tracking-[0.3px] text-white">
          Save
        </button>
      </section>
    </div>
  );
}
